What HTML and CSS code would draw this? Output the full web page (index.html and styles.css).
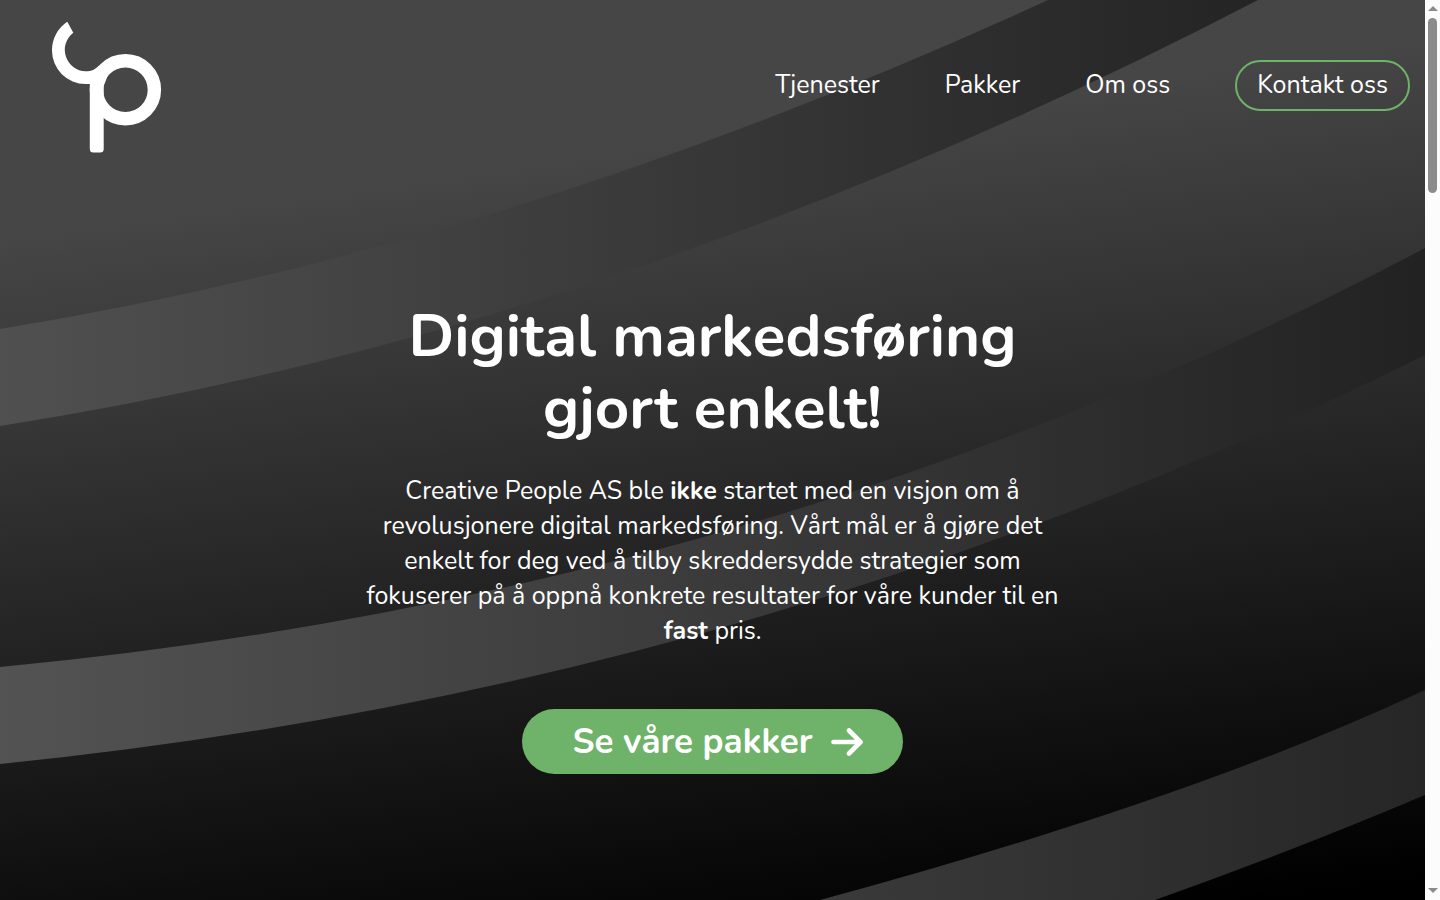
FILE: index.html
```html
<!DOCTYPE html>
<html lang="no">
<head>
  <meta charset="UTF-8">
  <meta name="viewport" content="width=device-width, initial-scale=1.0">
  <title>Creative People</title>
  <link rel="stylesheet" href="styles.css">
</head>
<body>
  <div class="page">
    <!-- Background waves -->
    <svg class="waves" viewBox="0 0 1425 900" preserveAspectRatio="none" aria-hidden="true">
      <defs>
        <linearGradient id="shade" gradientUnits="userSpaceOnUse" x1="27" y1="230" x2="142" y2="1056">
          <stop offset="0" stop-color="#464646"/>
          <stop offset="1" stop-color="#000"/>
        </linearGradient>
        <linearGradient id="band-top" gradientUnits="userSpaceOnUse" x1="0" y1="0" x2="1258" y2="0">
          <stop offset="0" stop-color="#505050"/>
          <stop offset="1" stop-color="#242424"/>
        </linearGradient>
        <linearGradient id="band-middle" gradientUnits="userSpaceOnUse" x1="0" y1="0" x2="1425" y2="0">
          <stop offset="0" stop-color="#535353"/>
          <stop offset="1" stop-color="#222"/>
        </linearGradient>
        <linearGradient id="band-bottom" gradientUnits="userSpaceOnUse" x1="820" y1="0" x2="1425" y2="0">
          <stop offset="0" stop-color="#3a3a3a"/>
          <stop offset="1" stop-color="#262626"/>
        </linearGradient>
      </defs>
      <rect width="1425" height="900" fill="url(#shade)"/>
      <path fill="url(#band-top)" d="M0 329Q510 247 1048 0H1258Q625 329 0 426Z"/>
      <path fill="url(#band-middle)" d="M0 667Q773 594 1425 248V355Q758 688 0 764Z"/>
      <path fill="url(#band-bottom)" d="M820 900Q1193 799 1425 690V795Q1295 850 1155 900Z"/>
    </svg>

    <header class="header">
      <a href="#" class="logo" aria-label="Creative People">
        <svg viewBox="0 0 110 132" width="110" height="132" aria-hidden="true">
          <g fill="#fff" transform="translate(-22 -21)">
            <path d="M37.3 21.7L43.3 32.7A21.5 21.5 0 0 0 55.5 71.3C62 71.3 65 69.5 69 65.5L78 75L73.7 86V149Q73.7 152.5 70.2 152.5H63.3Q59.8 152.5 59.8 149V84H55.5A33.5 33.5 0 0 1 22 50.5A34 34 0 0 1 37.3 21.7Z"/>
            <circle cx="95.4" cy="89.8" r="29" fill="none" stroke="#fff" stroke-width="13.4"/>
          </g>
        </svg>
      </a>
      <nav class="nav">
        <a href="#tjenester">Tjenester</a>
        <a href="#pakker">Pakker</a>
        <a href="#om-oss">Om oss</a>
        <a href="#kontakt" class="nav-contact">Kontakt oss</a>
      </nav>
    </header>

    <main class="hero">
      <h1>Digital markedsføring gjort enkelt!</h1>
      <p>Creative People AS ble <b>ikke</b> startet med en visjon om å revolusjonere digital markedsføring. Vårt mål er å gjøre det enkelt for deg ved å tilby skreddersydde strategier som fokuserer på å oppnå konkrete resultater for våre kunder til en <b>fast</b> pris.</p>
      <a href="#pakker" class="cta">
        Se våre pakker
        <svg viewBox="0 0 32 30" width="32" height="30" aria-hidden="true">
          <path d="M2.5 15H29M18 3.5L29.5 15L18 26.5" fill="none" stroke="#fff" stroke-width="4.6" stroke-linecap="round" stroke-linejoin="round"/>
        </svg>
      </a>
    </main>
  </div>

  <!-- Scroll track -->
  <div class="scroll" aria-hidden="true">
    <svg viewBox="0 0 10 5" width="10" height="5"><path d="M0 5L5 0L10 5Z" fill="#8b8b8b"/></svg>
    <div class="scroll-thumb"></div>
    <svg viewBox="0 0 10 5" width="10" height="5"><path d="M0 0L5 5L10 0Z" fill="#8b8b8b"/></svg>
  </div>
</body>
</html>
```
FILE: styles.css
```css
* {
  box-sizing: border-box;
}
body {
  margin: 0;
  display: flex;
  min-height: 100vh;
  font-family: Nunito, Lato, sans-serif;
  font-size: 25px;
  line-height: 35px;
  color: white;
  background-color: #000;
}
a {
  color: white;
  text-decoration: none;
}
.page {
  flex: 1;
  position: relative; /* Holds the waves behind the content */
}
.waves {
  position: absolute;
  inset: 0;
  width: 100%;
  height: 100%;
}
.header {
  position: relative;
  display: flex;
  justify-content: space-between;
  align-items: flex-start;
  padding: 21px 15px 18px 52px;
}
.logo svg {
  display: block;
}
.nav {
  display: flex;
  align-items: center;
  gap: 65px;
  padding-top: 39px;
}
.nav-contact {
  padding: 6px 20px;
  border: 2px solid #6fb269;
  border-radius: 26px;
}
.hero {
  position: relative;
  display: flex;
  flex-direction: column;
  align-items: center;
  padding: 129px 20px 60px;
  text-align: center;
}
h1 {
  max-width: 700px;
  margin: 0 0 30px;
  font-size: 60px;
  line-height: 72px;
}
p {
  max-width: 700px;
  margin: 0 0 60px;
}
.cta {
  display: flex;
  align-items: center;
  gap: 18px;
  padding: 8px 40px 8px 50px;
  border-radius: 33px;
  background-color: #6fb269;
  font-size: 35px;
  font-weight: bold;
  line-height: 49px;
}
.scroll {
  display: flex;
  flex-direction: column;
  align-items: center;
  width: 15px;
  padding: 6px 0 7px;
  background-color: #fcfcfc;
}
.scroll-thumb {
  width: 9px;
  height: 175px;
  margin: 7px 0 auto;
  border-radius: 5px;
  background-color: #8b8b8b;
}
```
